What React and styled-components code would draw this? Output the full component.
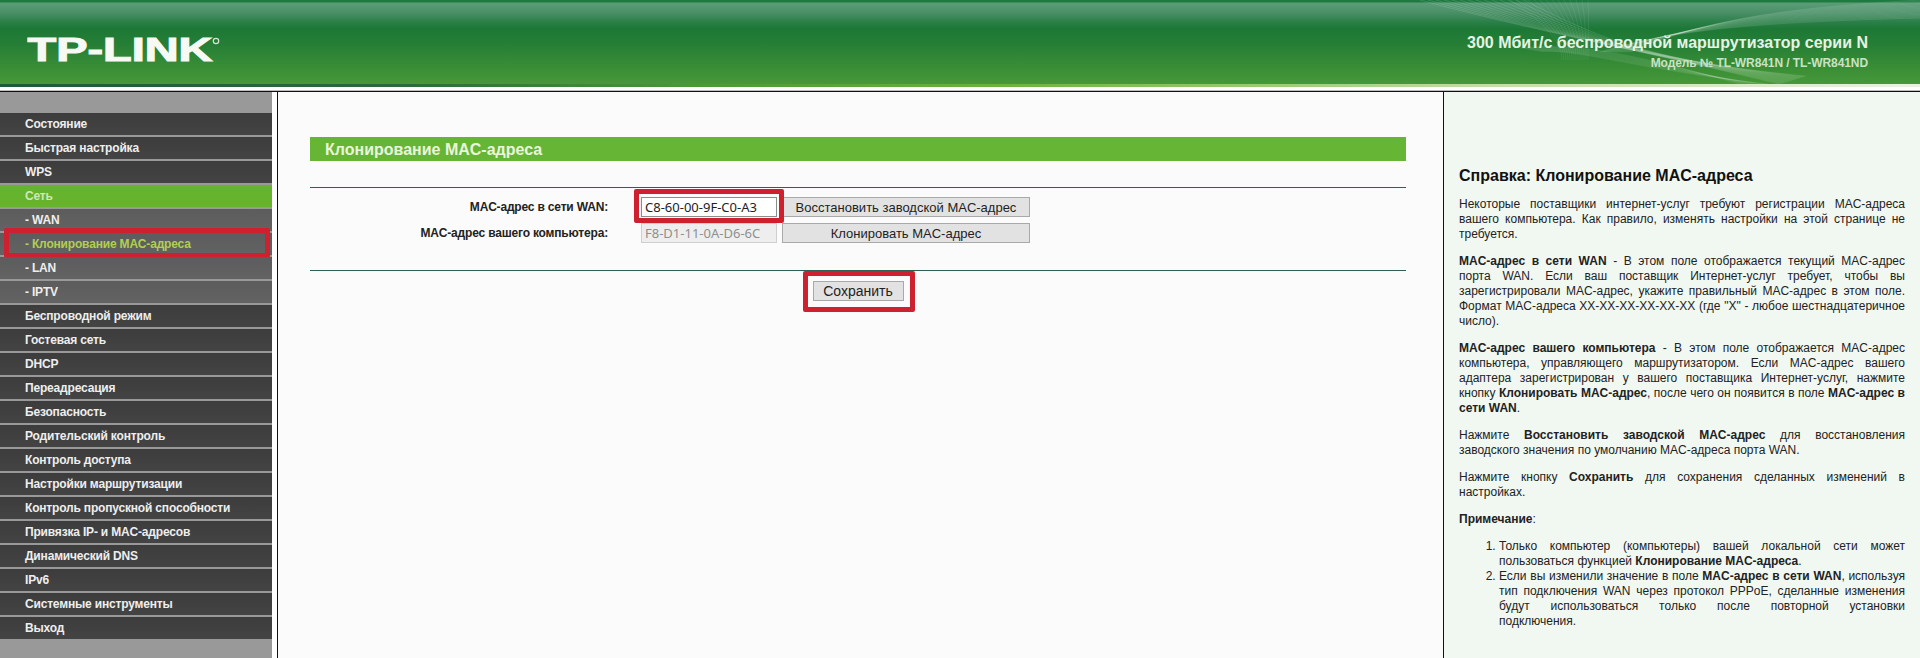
import React from "react";
import styled, { createGlobalStyle } from "styled-components";

const Global = createGlobalStyle`
  html, body { margin: 0; padding: 0; height: 100%; overflow: hidden; background: #fff; }
  #root { height: 100%; }
  * { box-sizing: border-box; }
`;

const Page = styled.div`
  height: 658px;
  display: flex;
  flex-direction: column;
  font-family: "Liberation Sans", Arial, sans-serif;
  color: #222;
  overflow: hidden;
`;

const Header = styled.header`
  position: relative;
  height: 84px;
  flex: none;
  display: flex;
  align-items: flex-start;
  justify-content: space-between;
  padding: 0 52px 0 27px;
  overflow: hidden;
  background: linear-gradient(
    180deg,
    #1f7a40 0,
    #1f7a40 2px,
    #5b9d78 3px,
    #498f66 13px,
    #2a7f48 22px,
    #1c7835 29px,
    #267f36 45px,
    #3b8f35 70px,
    #46983a 84px
  );
`;

const Logo = styled.svg`
  width: 200px;
  height: 30px;
  margin-top: 34px;
  flex: none;
  position: relative;
`;

const HeaderWaves = styled.svg`
  position: absolute;
  top: 0;
  left: 1300px;
  width: 620px;
  height: 84px;
`;

const HeaderText = styled.div`
  position: relative;
  margin-top: 33px;
  text-align: right;
  font-weight: bold;
`;

const ProductName = styled.div`
  font-size: 16px;
  line-height: 20px;
  color: #e6f3e4;
`;

const ModelName = styled.div`
  margin-top: 1px;
  font-size: 12px;
  line-height: 18px;
  letter-spacing: -0.08px;
  color: #c9e2c6;
`;

const HeaderEdge = styled.div`
  height: 3px;
  flex: none;
  background: linear-gradient(90deg, #1f5a37 0, #2a6a3c 400px, #4a9a38 700px, #6eb23a 1000px, #c3dfa8 1500px, #e8f3de 1920px);
`;

const HeaderGap = styled.div`
  height: 5px;
  flex: none;
  background: linear-gradient(180deg, #fff 0, #fff 3px, #bdbdbd 3px, #bdbdbd 4px, #111 4px);
`;

const Columns = styled.div`
  flex: 1;
  min-height: 0;
  display: flex;
`;

const Sidebar = styled.nav`
  width: 272px;
  flex: none;
  padding-top: 21px;
  background: #999;
`;

const MenuItem = styled.div`
  position: relative;
  height: 22px;
  margin-bottom: 2px;
  padding-left: 25px;
  font-size: 12px;
  font-weight: bold;
  line-height: 22px;
  letter-spacing: -0.18px;
  white-space: nowrap;
  color: ${(p) => (p.$active ? "#cfe8b4" : p.$current ? "#b0cf52" : "#eeeeee")};
  background: ${(p) =>
    p.$active
      ? "#66b32e"
      : p.$sub
      ? "linear-gradient(180deg, #5c5c5c, #636363)"
      : "linear-gradient(180deg, #3c3c3c, #444444)"};
`;

const SideGap = styled.div`
  width: 5px;
  flex: none;
  background: #fff;
`;

const Main = styled.main`
  flex: 1;
  min-width: 0;
  padding: 45px 37px 0 32px;
  background: #fbfbfb;
  border-left: 1px solid #111;
  border-right: 1px solid #111;
`;

const Title = styled.h1`
  margin: 0;
  height: 24px;
  padding-left: 15px;
  font-size: 16px;
  font-weight: bold;
  line-height: 25px;
  color: #eaf5dc;
  background: #66b534;
`;

const Rule = styled.div`
  height: 1px;
  background: #2f5f55;
`;

const Form = styled.div`
  margin-top: 26px;
  padding: 9px 0 27px;
  display: grid;
  grid-template-columns: 298px 136px 248px;
  grid-auto-rows: 20px;
  row-gap: 6px;
  border-top: 1px solid #2f5f55;
`;

const Label = styled.label`
  font-size: 12px;
  font-weight: bold;
  line-height: 20px;
  letter-spacing: -0.18px;
  text-align: right;
  color: #222;
`;

const FieldCell = styled.div`
  position: relative;
  height: 20px;
  margin-left: 33px;
  width: 136px;
`;

const Input = styled.input`
  display: block;
  width: 136px;
  height: 20px;
  padding: 0 3px;
  font-family: "Noto Sans", "Open Sans", sans-serif;
  font-size: 13px;
  color: ${(p) => (p.disabled ? "#8f8f8f" : "#222")};
  background: ${(p) => (p.disabled ? "#eeeeee" : "#fff")};
  border: 1px solid ${(p) => (p.disabled ? "#cfcfcf" : "#8c8c8c")};
  border-radius: 0;
  outline: none;
`;

const Highlight = styled.span`
  position: absolute;
  top: ${(p) => p.$t}px;
  right: ${(p) => p.$r}px;
  bottom: ${(p) => p.$b}px;
  left: ${(p) => p.$l}px;
  border: 5px solid #cf2030;
  border-radius: 2px;
  pointer-events: none;
`;

const Button = styled.button`
  height: 20px;
  margin-left: ${(p) => p.$ml || 0}px;
  width: ${(p) => p.$w}px;
  padding: 0;
  font-family: "Liberation Sans", Arial, sans-serif;
  font-size: ${(p) => p.$fs || 13}px;
  color: #222;
  background: #e2e2e2;
  border: 1px solid #a9a9a9;
  border-radius: 0;
`;

const SaveRow = styled.div`
  display: flex;
  justify-content: center;
  padding-top: 10px;
`;

const SaveCell = styled.div`
  position: relative;
  display: flex;
`;

const Help = styled.aside`
  width: 476px;
  flex: none;
  padding: 74px 15px 0 15px;
  background: #f1f8f2;
  font-size: 12px;
  line-height: 15px;
  color: #222;
`;

const HelpTitle = styled.h2`
  margin: 0 0 11px;
  font-size: 16px;
  line-height: 20px;
  font-weight: bold;
  color: #111;
`;

const Para = styled.p`
  margin: 0 0 12px;
  text-align: justify;
`;

const NoteList = styled.ol`
  margin: 12px 0 0;
  padding-left: 40px;
  text-align: justify;
`;

const LooseWords = styled.span`
  word-spacing: 1.5px;
`;

const menu = [
  { t: "Состояние" },
  { t: "Быстрая настройка" },
  { t: "WPS" },
  { t: "Сеть", active: true },
  { t: "- WAN", sub: true },
  { t: "- Клонирование MAC-адреса", sub: true, current: true },
  { t: "- LAN", sub: true },
  { t: "- IPTV", sub: true },
  { t: "Беспроводной режим" },
  { t: "Гостевая сеть" },
  { t: "DHCP" },
  { t: "Переадресация" },
  { t: "Безопасность" },
  { t: "Родительский контроль" },
  { t: "Контроль доступа" },
  { t: "Настройки маршрутизации" },
  { t: "Контроль пропускной способности" },
  { t: "Привязка IP- и MAC-адресов" },
  { t: "Динамический DNS" },
  { t: "IPv6" },
  { t: "Системные инструменты" },
  { t: "Выход" },
];

const range = (n) => Array.from({ length: n }, (_, i) => i);

export default function App() {
  return (
    <Page>
      <Global />
      <Header>
        <HeaderWaves viewBox="0 0 620 84" fill="none" aria-hidden="true">
          {range(14).map((i) => (
            <path
              key={`a${i}`}
              d={`M${120 + i * 8} 0 C${230 + i * 6} ${30 + i}, ${330 + i * 2} ${48 + i}, ${480 + i * 2} ${84 - i * 0.6}`}
              stroke="#ffffff"
              strokeOpacity="0.16"
              strokeWidth="0.8"
            />
          ))}
          {range(14).map((i) => (
            <path
              key={`b${i}`}
              d={`M${210 + i * 6} 0 C${250 + i * 3} 25, ${262 + i * 2} 46, ${262 + i * 2} 60`}
              stroke="#ffffff"
              strokeOpacity="0.1"
              strokeWidth="0.8"
            />
          ))}
          {range(16).map((i) => (
            <path
              key={`c${i}`}
              d={`M${300 + i * 2} 52 C${370 + i * 3} ${30 - i}, ${460 + i * 3} ${22 - i}, 620 ${18 - i * 1.2}`}
              stroke="#ffffff"
              strokeOpacity="0.13"
              strokeWidth="0.8"
            />
          ))}
          {range(8).map((i) => (
            <path
              key={`d${i}`}
              d={`M${220 + i * 3} ${48 + i * 0.5} C280 ${42 + i}, 340 ${56 + i * 2}, ${440 + i * 4} 84`}
              stroke="#ffffff"
              strokeOpacity="0.12"
              strokeWidth="0.8"
            />
          ))}
        </HeaderWaves>
        <Logo viewBox="0 0 200 30" role="img" aria-label="TP-LINK">
          <text
            x="0.5"
            y="27"
            textLength="185"
            lengthAdjust="spacingAndGlyphs"
            fontFamily="'Liberation Sans', Arial, sans-serif"
            fontWeight="bold"
            fontSize="33.5"
            fill="#f6f9f4"
            stroke="#f6f9f4"
            strokeWidth="1.1"
          >
            TP-LINK
          </text>
          <circle cx="189" cy="7" r="2.7" fill="none" stroke="#d5e6d5" strokeWidth="1.2" />
        </Logo>
        <HeaderText>
          <ProductName>300 Мбит/с беспроводной маршрутизатор серии N</ProductName>
          <ModelName>Модель № TL-WR841N / TL-WR841ND</ModelName>
        </HeaderText>
      </Header>
      <HeaderEdge />
      <HeaderGap />
      <Columns>
        <Sidebar>
          {menu.map((m) => (
            <MenuItem key={m.t} $active={m.active} $sub={m.sub} $current={m.current}>
              {m.t}
              {m.current && <Highlight $t={-5} $r={2} $b={-3} $l={4} />}
            </MenuItem>
          ))}
        </Sidebar>
        <SideGap />
        <Main>
          <Title>Клонирование MAC-адреса</Title>
          <Form>
            <Label>MAC-адрес в сети WAN:</Label>
            <FieldCell>
              <Input defaultValue="C8-60-00-9F-C0-A3" />
              <Highlight $t={-8} $r={-7} $b={-6} $l={-7} />
            </FieldCell>
            <Button $w={248} $ml={38}>Восстановить заводской MAC-адрес</Button>
            <Label>MAC-адрес вашего компьютера:</Label>
            <FieldCell>
              <Input disabled defaultValue="F8-D1-11-0A-D6-6C" />
            </FieldCell>
            <Button $w={248} $ml={38}>Клонировать MAC-адрес</Button>
          </Form>
          <Rule />
          <SaveRow>
            <SaveCell>
              <Button $w={91} $fs={14}>Сохранить</Button>
              <Highlight $t={-10} $r={-11} $b={-11} $l={-10} />
            </SaveCell>
          </SaveRow>
        </Main>
        <Help>
          <HelpTitle>Справка: Клонирование MAC-адреса</HelpTitle>
          <Para>
            Некоторые поставщики интернет-услуг требуют регистрации MAC-адреса вашего компьютера. Как правило,
            изменять настройки на этой странице не требуется.
          </Para>
          <Para>
            <b>MAC-адрес в сети WAN</b> - В этом поле отображается текущий MAC-адрес порта WAN. Если ваш поставщик
            Интернет-услуг требует, чтобы вы зарегистрировали MAC-адрес, укажите правильный MAC-адрес в этом поле.
            Формат MAC-адреса XX-XX-XX-XX-XX-XX (где "X" - любое шестнадцатеричное число).
          </Para>
          <Para>
            <b>MAC-адрес вашего компьютера</b> - В этом поле отображается MAC-адрес компьютера, управляющего
            маршрутизатором. Если MAC-адрес вашего адаптера зарегистрирован у вашего поставщика Интернет-услуг,
            нажмите кнопку <b>Клонировать MAC-адрес</b>, после чего он появится в поле <b>MAC-адрес в сети WAN</b>.
          </Para>
          <Para>
            Нажмите <b>Восстановить заводской MAC-адрес</b> для восстановления заводского значения по умолчанию
            MAC-адреса порта WAN.
          </Para>
          <Para>
            Нажмите кнопку <b>Сохранить</b> для сохранения сделанных изменений в настройках.
          </Para>
          <Para>
            <b>Примечание</b>:
          </Para>
          <NoteList>
            <li>
              Только компьютер (компьютеры) вашей локальной сети может пользоваться функцией{" "}
              <b>Клонирование MAC-адреса</b>.
            </li>
            <li>
              Если вы изменили значение в поле <b>MAC-адрес в сети WAN</b>, используя тип подключения WAN через
              протокол PPPoE, сделанные изменения{" "}
              <LooseWords>будут использоваться только после повторной установки подключения.</LooseWords>
            </li>
          </NoteList>
        </Help>
      </Columns>
    </Page>
  );
}
